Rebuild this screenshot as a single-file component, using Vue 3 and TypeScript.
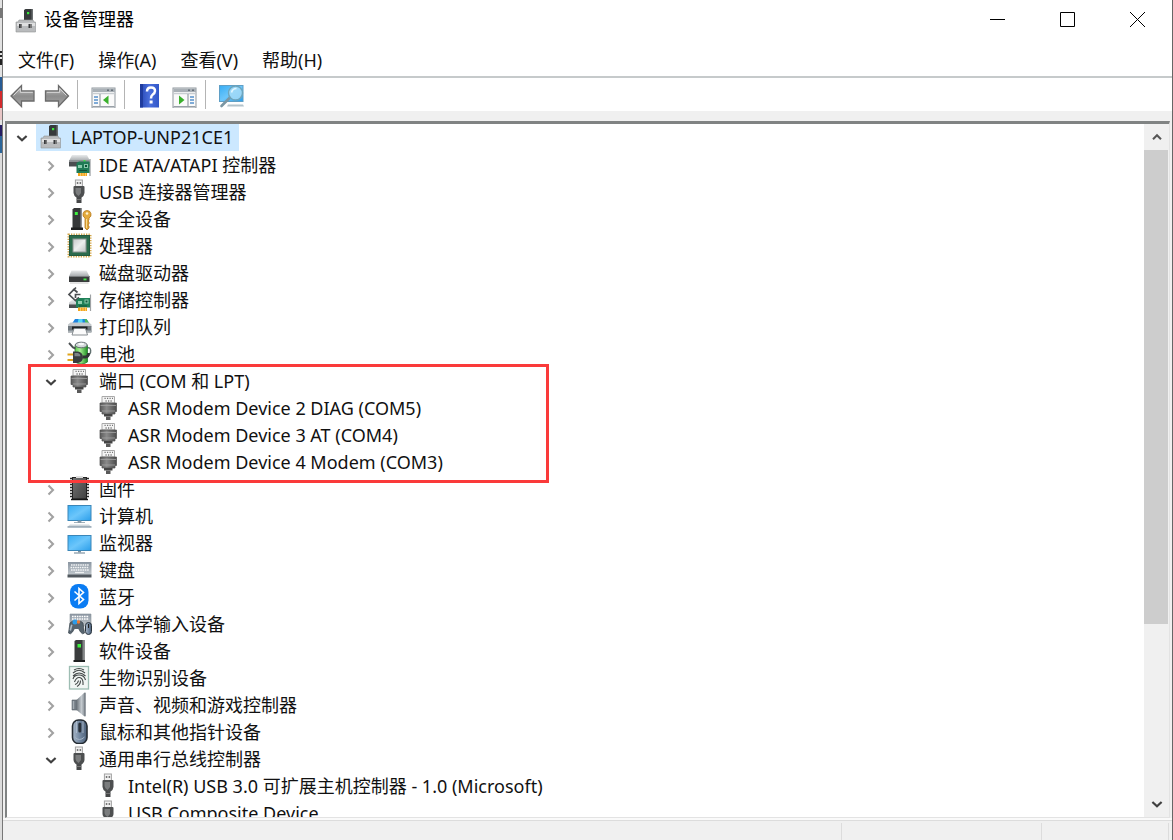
<script setup lang="ts">
import { ref } from 'vue'

interface Device {
  name: string
  icon: string
}

interface Category extends Device {
  open?: boolean
  marked?: boolean
  devices?: Device[]
}

const menus = ['文件(F)', '操作(A)', '查看(V)', '帮助(H)']

const toolGroups = [
  [
    { icon: 'back', label: '后退' },
    { icon: 'forward', label: '前进' },
  ],
  [{ icon: 'pane-left', label: '显示/隐藏控制台树' }],
  [
    { icon: 'help', label: '帮助' },
    { icon: 'pane-right', label: '显示/隐藏操作窗格' },
  ],
  [{ icon: 'scan', label: '扫描检测硬件改动' }],
]

const rootOpen = ref(true)

const categories = ref<Category[]>([
  { name: 'IDE ATA/ATAPI 控制器', icon: 'ide' },
  { name: 'USB 连接器管理器', icon: 'usb' },
  { name: '安全设备', icon: 'security' },
  { name: '处理器', icon: 'cpu' },
  { name: '磁盘驱动器', icon: 'disk' },
  { name: '存储控制器', icon: 'storage' },
  { name: '打印队列', icon: 'printer' },
  { name: '电池', icon: 'battery' },
  {
    name: '端口 (COM 和 LPT)',
    icon: 'port',
    open: true,
    marked: true,
    devices: [
      { name: 'ASR Modem Device 2 DIAG (COM5)', icon: 'port' },
      { name: 'ASR Modem Device 3 AT (COM4)', icon: 'port' },
      { name: 'ASR Modem Device 4 Modem (COM3)', icon: 'port' },
    ],
  },
  { name: '固件', icon: 'firmware' },
  { name: '计算机', icon: 'computer' },
  { name: '监视器', icon: 'monitor' },
  { name: '键盘', icon: 'keyboard' },
  { name: '蓝牙', icon: 'bluetooth' },
  { name: '人体学输入设备', icon: 'hid' },
  { name: '软件设备', icon: 'software' },
  { name: '生物识别设备', icon: 'biometric' },
  { name: '声音、视频和游戏控制器', icon: 'sound' },
  { name: '鼠标和其他指针设备', icon: 'mouse' },
  {
    name: '通用串行总线控制器',
    icon: 'usb',
    open: true,
    devices: [
      { name: 'Intel(R) USB 3.0 可扩展主机控制器 - 1.0 (Microsoft)', icon: 'usb' },
      { name: 'USB Composite Device', icon: 'usb' },
    ],
  },
])
</script>

<template>
  <div class="screen">
    <svg class="defs" width="0" height="0" aria-hidden="true">
      <defs>
        <linearGradient id="gMetal" x1="0" y1="0" x2="0" y2="1">
          <stop offset="0" stop-color="#e9ebec" /><stop offset="1" stop-color="#a3a7aa" />
        </linearGradient>
        <linearGradient id="gArrow" x1="0" y1="0" x2="0" y2="1">
          <stop offset="0" stop-color="#c4c4c4" /><stop offset="0.5" stop-color="#8c8c8c" /><stop offset="1" stop-color="#a8a8a8" />
        </linearGradient>
        <linearGradient id="gScreen" x1="0" y1="0" x2="1" y2="1">
          <stop offset="0" stop-color="#37adf4" /><stop offset="0.5" stop-color="#6cc6fb" /><stop offset="1" stop-color="#2b9eea" />
        </linearGradient>
        <linearGradient id="gHelp" x1="0" y1="0" x2="1" y2="0">
          <stop offset="0" stop-color="#2647b4" /><stop offset="0.5" stop-color="#4a6fdc" /><stop offset="1" stop-color="#3157c8" />
        </linearGradient>
        <linearGradient id="gPlug" x1="0" y1="0" x2="1" y2="0">
          <stop offset="0" stop-color="#5a5a5a" /><stop offset="0.4" stop-color="#8a8a8a" /><stop offset="1" stop-color="#4c4c4c" />
        </linearGradient>
        <linearGradient id="gChip" x1="0" y1="0" x2="1" y2="1">
          <stop offset="0" stop-color="#737373" /><stop offset="1" stop-color="#3f3f3f" />
        </linearGradient>
        <linearGradient id="gCap" x1="0" y1="0" x2="1" y2="1">
          <stop offset="0" stop-color="#c4c7c8" /><stop offset="0.5" stop-color="#eceeee" /><stop offset="1" stop-color="#bfc3c4" />
        </linearGradient>
        <linearGradient id="gKeys" x1="0" y1="0" x2="0" y2="1">
          <stop offset="0" stop-color="#8b96a2" /><stop offset="1" stop-color="#c1c8cd" />
        </linearGradient>
        <linearGradient id="gMouse" x1="0" y1="0" x2="1" y2="0">
          <stop offset="0" stop-color="#a9b8c9" /><stop offset="0.5" stop-color="#7388a1" /><stop offset="1" stop-color="#4c6079" />
        </linearGradient>
        <linearGradient id="gCone" x1="0" y1="0" x2="1" y2="0">
          <stop offset="0" stop-color="#6a7279" /><stop offset="0.55" stop-color="#c4cacf" /><stop offset="1" stop-color="#7d868d" />
        </linearGradient>
        <linearGradient id="gBattery" x1="0" y1="0" x2="1" y2="0">
          <stop offset="0" stop-color="#5ecb4f" /><stop offset="0.4" stop-color="#a6ef92" /><stop offset="1" stop-color="#1e8d22" />
        </linearGradient>
      </defs>

      <symbol id="chevron-right" viewBox="0 0 14 14">
        <path d="M4.500 2.600 9 7 4.500 11.400" fill="none" stroke="#a2a2a2" stroke-width="2.100" />
      </symbol>
      <symbol id="chevron-down" viewBox="0 0 14 14">
        <path d="M2.400 5 7 9.300 11.600 5" fill="none" stroke="#404040" stroke-width="2.200" />
      </symbol>
      <symbol id="chevron-up" viewBox="0 0 14 14">
        <path d="M3 9.300 7 5.200 11 9.300" fill="none" stroke="#555" stroke-width="2" />
      </symbol>

      <symbol id="root" viewBox="0 0 26 26">
        <path d="M11 3 12.500 2H20v12h-9z" fill="#373a3c" />
        <path d="M18.500 2H20v12h-1.500z" fill="#6a6e70" />
        <rect x="14" y="5" width="2.200" height="2.200" fill="#39e83d" />
        <path d="M3 15h2l1-2h14l1 2h1.500v10H3z" fill="#b9bbbd" stroke="#919496" stroke-width=".6" />
        <path d="M4 16h18v3H4z" fill="#dedfe0" />
        <path d="M6 17h3v4H6zM15.500 17h3v4h-3z" fill="#383a3c" />
        <path d="M7.500 17H9v4H7.500zM17 17h1.500v4H17z" fill="#777" />
      </symbol>

      <symbol id="ide" viewBox="0 0 26 26">
        <path d="M6 4h15l3 6H3z" fill="url(#gMetal)" />
        <path d="M3 9.500h21v6H3z" fill="#4b4e50" />
        <path d="M3 9.500h21v1.200H3z" fill="#a9adaf" />
        <rect x="17.500" y="9" width="2" height="1.600" fill="#3ee444" />
        <path d="M24 8v17" stroke="#9da1a4" stroke-width="1.300" />
        <path d="M10.500 12 13 10.500h10.500V22h-13z" fill="#1f7b55" />
        <path d="M12 14h4v3h-4zM18 13h4v4h-4z" fill="#88c9aa" />
        <path d="M19 14h2v2h-2zM13 19h8v1h-8z" fill="#0f4e36" />
        <path d="M12 22h9v3h-9z" fill="#f3a51d" />
        <path d="M14.500 22v3M17 22v3M19.500 22v3" stroke="#fff0c0" stroke-width=".5" />
      </symbol>

      <symbol id="usb" viewBox="0 0 26 26">
        <rect x="9.400" y="2" width="7" height="7" fill="#f0f0f0" stroke="#a2a2a2" />
        <path d="M10.800 4h1.500v2h-1.500zM13.600 4h1.500v2h-1.500z" fill="#777" />
        <path d="M7.500 9q0-1 1-1h9q1 0 1 1v6q0 2.500-3.500 5h-4Q7.500 17.500 7.500 15z" fill="#4d4f50" />
        <path d="M9.500 10h5.500v5q-1.500 2-2.500 3-3-2-3-4z" fill="#7a7c7d" />
        <path d="M10.500 19.500h5V25h-5z" fill="#454748" />
        <path d="M10.500 21.500h5" stroke="#8a8a8a" stroke-width=".7" />
      </symbol>

      <symbol id="security" viewBox="0 0 26 26">
        <path d="M6.500 4.500 8 3h8v20H6.500z" fill="#363839" />
        <path d="M14.500 3H16v20h-1.500z" fill="#8c8f91" />
        <path d="M5 22.500h12V25H5z" fill="#1f2021" />
        <rect x="8.800" y="7" width="3" height="3" fill="#3ef23f" />
        <path d="M21 5.500a4 4 0 0 0-2 7.500v10l2 2 2-2v-2l-1.300-1 1.300-1v-2l-1-1 1-1v-2a4 4 0 0 0-2-7.500z" fill="#e3aa3c" stroke="#b67a1f" stroke-width=".8" />
        <circle cx="21" cy="8.500" r="1.300" fill="#fff3cf" />
        <path d="M20.500 14v9" stroke="#f9dc91" />
      </symbol>

      <symbol id="cpu" viewBox="0 0 26 26">
        <rect x="2.500" y="2.500" width="22" height="22" fill="none" stroke="#d2a648" stroke-width="2" stroke-dasharray="1.300 1.200" />
        <rect x="3.500" y="3.500" width="20" height="20" fill="#2b6b4c" stroke="#235940" />
        <rect x="7" y="7" width="13" height="13" fill="url(#gCap)" stroke="#8d9692" />
      </symbol>

      <symbol id="disk" viewBox="0 0 26 26">
        <path d="M5.500 11.500h15l3 6H3z" fill="url(#gMetal)" />
        <path d="M3 17h20.500v6H3z" fill="#393b3c" />
        <path d="M3 17h20.500v1H3z" fill="#7b7e80" />
        <rect x="17.500" y="19.500" width="3" height="1.800" fill="#43e949" />
        <path d="M4 24h18.500" stroke="#c6c6c6" />
      </symbol>

      <symbol id="storage" viewBox="0 0 26 26">
        <path d="M3 16.500 6 14h9v8H3z" fill="url(#gMetal)" />
        <path d="M3 18.500h9V22H3z" fill="#4a4d4f" />
        <path d="M11.500 6.500 8 3.500 3 8.500l6.500 6 3.500-3" fill="none" stroke="#4b4e51" stroke-width="1.700" />
        <path d="M7 4.500 10 1.500M14.500 8.500H9.500v3.500" fill="none" stroke="#4b4e51" stroke-width="1.700" />
        <path d="M24.500 8.500V25" stroke="#9ea2a4" stroke-width="1.200" />
        <path d="M10 14.500 13 12h11v9.500H10z" fill="#1f8058" />
        <path d="M12 15h4v3h-4zM18.500 13.500h4v4h-4z" fill="#8dceaf" />
        <path d="M19.500 14.500h2v2h-2zM13 19.500h8v1h-8z" fill="#0f5539" />
        <path d="M12 21.500h9V25h-9z" fill="#f3a51d" />
        <path d="M14.500 21.500V25M17 21.500V25M19.500 21.500V25" stroke="#fff0c0" stroke-width=".5" />
      </symbol>

      <symbol id="printer" viewBox="0 0 26 26">
        <path d="M6 10.500 9 6h11.500l3 4.500z" fill="#1e83df" />
        <path d="M12.500 6h4v4.500h-5z" fill="#52d6f3" />
        <path d="M18.500 6h2l3 4.500h-4z" fill="#4cba59" />
        <path d="M2 11.500 4.500 9.500h18.500l2.500 2v2H2z" fill="#c3c8cb" />
        <path d="M2 13h23.500v6.500H2z" fill="#71797f" />
        <path d="M2 17.500h23.500v1.500H2z" fill="#a9b0b5" />
        <path d="M6 13.500h15.500v3H6z" fill="#202425" />
        <path d="M8 15.500h11.500l2 6.500H6z" fill="#fbfbfb" stroke="#7c8286" stroke-width=".9" />
      </symbol>

      <symbol id="battery" viewBox="0 0 26 26">
        <path d="M20.500 8q5-1.500 4 4.500-1 3-4 5" fill="none" stroke="#60706f" stroke-width="1.500" />
        <path d="M9 5.500h12.500V22q-6 4-12.500 0z" fill="url(#gBattery)" stroke="#287f31" stroke-width=".8" />
        <ellipse cx="15.200" cy="5" rx="6" ry="2.800" fill="#d3d8d9" stroke="#636c70" />
        <ellipse cx="15.200" cy="4" rx="3" ry="1.300" fill="#f7f8f8" />
        <path d="m3 3 4 4.500 2.500 1" fill="none" stroke="#4c5153" stroke-width="1.900" />
        <path d="M1.500 14.500H8M1.500 20H8" stroke="#e0a51c" stroke-width="1.800" />
        <path d="M7 11.500h5q5 1 5 5.800t-5 5.700H7z" fill="#393d3f" />
        <path d="M17 17h2.500q3 0 3-4" fill="none" stroke="#303335" stroke-width="2.800" />
        <path d="M8.500 13H12q2.500 1 2.500 3.200h-6z" fill="#7d8386" />
      </symbol>

      <symbol id="port" viewBox="0 0 26 26">
        <path d="M7 2.500h12.500v6.500H7z" fill="#f4f4f4" stroke="#aaa" />
        <path d="M9.500 4.300h1.200M12 4.300h1.200M14.500 4.300h1.200M17 4.300h1M10.500 7h1.200M13 7h1.200M15.500 7h1.200" stroke="#777" stroke-width="1.300" />
        <path d="M5 9h16.500v8.500h-1.500V20H7v-2.500H5z" fill="url(#gPlug)" stroke="#4e4e4e" stroke-width=".7" />
        <path d="M5.500 11.500h15.500M7 17h13" stroke="#a3a3a3" stroke-width=".8" />
        <path d="M9 20h8.500v2.500H9z" fill="#444" />
        <path d="M11 22.500h4.500V26H11z" fill="#5a5a5a" />
      </symbol>

      <symbol id="firmware" viewBox="0 0 26 26">
        <path d="M4 3.500h19M4 6.500h19M4 9.500h19M4 12.500h19M4 15.500h19M4 18.500h19M4 21.500h19" stroke="#292929" stroke-width="1.500" />
        <rect x="6.500" y="2.500" width="14" height="21.500" fill="url(#gChip)" stroke="#222" />
        <path d="M5 24.500h17" stroke="#161616" stroke-width="1.500" />
        <path d="M10 1h7v2h-7z" fill="#ddd" />
      </symbol>

      <symbol id="computer" viewBox="0 0 26 26">
        <rect x="2" y="3.500" width="23" height="15" fill="url(#gScreen)" stroke="#3a86b8" />
        <path d="M12 19h3v1.500h-3zM8 20.500h11" stroke="#8a9daa" stroke-width=".8" fill="#8a9daa" />
        <path d="M4 22.500h19l2.500 2.500h-24z" fill="#cfd7dc" />
        <path d="M1.500 25h24" stroke="#7d93a3" stroke-width="1.200" />
      </symbol>

      <symbol id="monitor" viewBox="0 0 26 26">
        <rect x="2" y="6.500" width="23" height="15" fill="url(#gScreen)" stroke="#3a86b8" />
        <path d="M12 22h3v1.500h-3z" fill="#7c929f" />
        <path d="M8 24h11" stroke="#8a9daa" stroke-width="1.300" />
      </symbol>

      <symbol id="keyboard" viewBox="0 0 26 26">
        <path d="M2 6h23.500v13H2z" fill="url(#gKeys)" />
        <path d="M5 9h18M4.500 11.500h18M5 14h18" stroke="#f2f4f5" stroke-width="1.400" stroke-dasharray="1.600 .7" />
        <path d="M9 16.500h9" stroke="#eef0f1" stroke-width="1.200" />
        <path d="M1.500 18.500h24V21.500h-24z" fill="#51585e" />
      </symbol>

      <symbol id="bluetooth" viewBox="0 0 26 26">
        <rect x="4" y="1" width="18.500" height="24.500" rx="8" fill="#0a7cf3" />
        <path d="m8.500 8.500 9 8-4.500 4V5.500l4.500 4-9 8" fill="none" stroke="#fff" stroke-width="1.600" />
      </symbol>

      <symbol id="hid" viewBox="0 0 26 26">
        <path d="M4 4h21v12H4z" fill="url(#gKeys)" stroke="#8b949b" stroke-width=".6" />
        <path d="M6 6.500h17M6 9h17" stroke="#fff" stroke-width="1.300" stroke-dasharray="1.600 .8" />
        <path d="M4 13q2-3 5-1h3q3-2 5 1l1.500 10q-2 2-4-1l-2-3.500H8.500l-2 3.500q-2 3-4 1z" fill="#57646f" stroke="#3a454e" stroke-width=".7" />
        <path d="M3.500 20 5 14.500l1.500.5-1.500 6z" fill="#acb9c4" />
        <circle cx="9" cy="12" r="2.500" fill="#2d9be7" /><circle cx="12.500" cy="12" r="1.700" fill="#ef7932" />
        <rect x="19.500" y="12.500" width="6" height="12" rx="3" fill="url(#gMouse)" stroke="#29323b" />
        <path d="M22.500 14v4" stroke="#222" />
      </symbol>

      <symbol id="software" viewBox="0 0 26 26">
        <path d="M8.500 4 10 3h8.500v20h-10z" fill="#3a3c3d" />
        <path d="M16.500 3h2v20h-2z" fill="#828586" />
        <path d="M7.500 23H19v2H7.500z" fill="#1e1f20" />
        <rect x="11.500" y="7" width="3.500" height="3.500" fill="#3ef23f" />
      </symbol>

      <symbol id="biometric" viewBox="0 0 26 26">
        <rect x="3.500" y="2.500" width="19" height="22.500" fill="#f1f6f4" stroke="#9dbdb3" stroke-width="1.300" />
        <g fill="none" stroke="#424747" stroke-width="1.100">
          <path d="M8 6q5-3 10 0M7 9q6-5.500 12 0M7 12q6-6 12.500 0M7 15q1-4 6-4t6.500 5M8.500 18q2-5 5-4.500T17 18v3M9 20.500q3-1 3.500-4M11 22.500q3.500-2 3.500-6" />
        </g>
      </symbol>

      <symbol id="sound" viewBox="0 0 26 26">
        <path d="M6 9h5v10H6z" fill="#727b83" stroke="#5c656c" stroke-width=".6" />
        <path d="M10.500 9 18.500 1.500h1V25.500h-1l-8-6.500z" fill="url(#gCone)" />
        <path d="M18.800 2v23" stroke="#7d858c" stroke-width="1.500" />
        <path d="M7.500 10v8" stroke="#a6aeb4" stroke-width="1.500" />
      </symbol>

      <symbol id="mouse" viewBox="0 0 26 26">
        <rect x="6.500" y="2" width="14.500" height="23.500" rx="6" fill="url(#gMouse)" stroke="#252c33" stroke-width="1.600" />
        <path d="M10.500 3v12M17 3v12" stroke="#b5c2d0" stroke-width=".8" />
        <rect x="12.300" y="4.500" width="3" height="10" rx="1.500" fill="#29313a" />
        <path d="M8.500 19q5 5 10 0" fill="none" stroke="#a4b4c5" />
      </symbol>

      <symbol id="back" viewBox="0 0 26 26">
        <path d="M1 14 11.500 3.500V9H24v10H11.500v5.500z" fill="url(#gArrow)" stroke="#6b6b6b" stroke-width="1.300" />
        <path d="M3.500 13.500 10.300 6.500V10.300h12.500" fill="none" stroke="#dadada" />
      </symbol>
      <symbol id="forward" viewBox="0 0 26 26">
        <path d="M24.500 14 14.500 3.500V9H1.500v10h13v5.500z" fill="url(#gArrow)" stroke="#6b6b6b" stroke-width="1.300" />
        <path d="M2.800 10.300H15.700V6.500L22.500 13.500" fill="none" stroke="#dadada" />
      </symbol>
      <symbol id="pane-left" viewBox="0 0 26 26">
        <rect x="1" y="6" width="23" height="20" fill="#fafafa" stroke="#8f979e" />
        <path d="M1.500 6.500h22.500V10h-22.500z" fill="#a9b0b6" />
        <path d="M16 7.500h2V9h-2zM20 7.500h2V9h-2z" fill="#67707a" />
        <path d="M1.500 11.500h22" stroke="#c9ced2" stroke-width="1.500" />
        <path d="M9 12v13M1.500 24.500h22" stroke="#98a0a7" stroke-width="1.200" />
        <path d="M3 15h4M3 18h4M3 21h4" stroke="#5791cc" stroke-width="1.500" />
        <path d="M17.500 13.500v9L12 18z" fill="#3ab02c" />
      </symbol>
      <symbol id="pane-right" viewBox="0 0 26 26">
        <rect x="1" y="6" width="23" height="20" fill="#fafafa" stroke="#8f979e" />
        <path d="M1.500 6.500h22.500V10h-22.500z" fill="#a9b0b6" />
        <path d="M16 7.500h2V9h-2zM20 7.500h2V9h-2z" fill="#67707a" />
        <path d="M1.500 11.500h22" stroke="#c9ced2" stroke-width="1.500" />
        <path d="M16 12v13M1.500 24.500h22" stroke="#98a0a7" stroke-width="1.200" />
        <path d="M18 15h4M18 18h4M18 21h4" stroke="#5791cc" stroke-width="1.500" />
        <path d="M7 13.500v9l5.500-4.500z" fill="#3ab02c" />
      </symbol>
      <symbol id="help" viewBox="0 0 26 26">
        <path d="M2 2h19v23.500H2z" fill="url(#gHelp)" />
        <path d="M2 2h3v23.500H2z" fill="#1f3c9e" />
        <path d="M9 9.500q0-4 4-4t4 3.600q0 2-2.500 3.600-1.500 1-1.500 3.800" fill="none" stroke="#fff" stroke-width="2.500" />
        <rect x="11.600" y="18.500" width="3" height="3" fill="#fff" />
      </symbol>
      <symbol id="scan" viewBox="0 0 26 26">
        <rect x="0.500" y="3.500" width="23.500" height="16" fill="url(#gScreen)" stroke="#5f9fc6" />
        <path d="M9 22.500h15l1 2H8z" fill="#b4c3cb" />
        <path d="M11 15.500 2.500 24" stroke="#7b96a3" stroke-width="2.600" stroke-linecap="round" />
        <circle cx="16.500" cy="11" r="7" fill="#a5dcf8" fill-opacity=".85" stroke="#6ea5bc" stroke-width="1.400" />
        <path d="M12.500 10.500q1-4 5-4" fill="none" stroke="#e3f7ff" stroke-width="1.600" />
      </symbol>
    </svg>

    <div class="backdrop"></div>

    <main class="window">
      <header class="titlebar">
        <svg class="icon"><use href="#root" /></svg>
        <h1>设备管理器</h1>
        <div class="captions">
          <button type="button" aria-label="最小化">
            <svg viewBox="0 0 15 15"><path d="M0 7.500h15" /></svg>
          </button>
          <button type="button" aria-label="最大化">
            <svg viewBox="0 0 15 15"><path d="M.5.500h14v14H.5z" /></svg>
          </button>
          <button type="button" aria-label="关闭">
            <svg viewBox="0 0 15 15"><path d="m0 0 15 15M15 0 0 15" /></svg>
          </button>
        </div>
      </header>

      <nav class="menubar">
        <button v-for="menu in menus" :key="menu" type="button">{{ menu }}</button>
      </nav>

      <div class="toolbar" role="toolbar">
        <div v-for="(group, index) in toolGroups" :key="index" class="tool-group">
          <button v-for="tool in group" :key="tool.icon" type="button" :aria-label="tool.label">
            <svg class="icon"><use :href="`#${tool.icon}`" /></svg>
          </button>
        </div>
      </div>

      <section class="tree-frame">
        <div class="tree">
          <div class="row root">
            <button class="twisty" type="button" aria-label="展开或折叠" @click="rootOpen = !rootOpen">
              <svg><use :href="rootOpen ? '#chevron-down' : '#chevron-right'" /></svg>
            </button>
            <span class="entry selected">
              <svg class="icon"><use href="#root" /></svg>
              <span>LAPTOP-UNP21CE1</span>
            </span>
          </div>
          <ul v-if="rootOpen" class="categories">
            <li v-for="category in categories" :key="category.name" :class="{ marked: category.marked }">
              <div class="row category">
                <button class="twisty" type="button" aria-label="展开或折叠" @click="category.open = !category.open">
                  <svg><use :href="category.open ? '#chevron-down' : '#chevron-right'" /></svg>
                </button>
                <span class="entry">
                  <svg class="icon"><use :href="`#${category.icon}`" /></svg>
                  <span>{{ category.name }}</span>
                </span>
              </div>
              <ul v-if="category.open && category.devices">
                <li v-for="device in category.devices" :key="device.name" class="row device">
                  <span class="entry">
                    <svg class="icon"><use :href="`#${device.icon}`" /></svg>
                    <span>{{ device.name }}</span>
                  </span>
                </li>
              </ul>
            </li>
          </ul>
        </div>
        <div class="scrollbar">
          <button type="button" aria-label="向上滚动"><svg><use href="#chevron-up" /></svg></button>
          <div class="track"><div class="thumb"></div></div>
          <button type="button" aria-label="向下滚动"><svg><use href="#chevron-down" /></svg></button>
        </div>
      </section>

      <footer class="statusbar">
        <span class="main-cell"></span>
        <span class="cell wide"></span>
        <span class="cell"></span>
      </footer>
    </main>
  </div>
</template>

<style>
body {
  margin: 0;
  overflow: hidden;
}
</style>

<style scoped>
.screen {
  display: flex;
  height: 100vh;
  overflow: hidden;
  color: #111;
  font-family: 'Noto Sans', 'Noto Sans CJK SC', sans-serif;
  font-size: 18px;
  line-height: 27px;
}

.defs {
  position: absolute;
}

button {
  display: flex;
  align-items: center;
  justify-content: center;
  padding: 0;
  border: 0;
  background: none;
  color: inherit;
  font: inherit;
}

ul {
  margin: 0;
  padding: 0;
  list-style: none;
}

.icon {
  flex: none;
  width: 26px;
  height: 26px;
}

/* Sliver of the desktop that shows to the left of the window */
.backdrop {
  flex: none;
  width: 2px;
  background: linear-gradient(
    #e2e2e2 8px, #777 8px 18px, #e2e2e2 18px 51px, #222 51px 53px, #e2e2e2 53px 55px,
    #222 55px 57px, #e2e2e2 57px 59px, #222 59px 65px, #e2e2e2 65px 77px, #275b94 77px 91px,
    #d42a2d 91px 108px, #e8c6c6 108px 120px, #e2e2e2 120px 125px, #241c62 125px 136px,
    #2b6599 136px 153px, #dcdcdc 153px
  );
}

.window {
  display: flex;
  flex: 1;
  flex-direction: column;
  min-width: 0;
  border-right: 1px solid #666;
  border-left: 1px solid #777;
  background: #f0f0f0;
}

.titlebar {
  display: flex;
  flex: none;
  align-items: center;
  height: 39px;
  padding-left: 10px;
  background: #fff;
}

.titlebar h1 {
  flex: 1;
  margin: 0 0 0 5px;
  color: #000;
  font-size: 18px;
  font-weight: 400;
}

.captions {
  display: flex;
  align-self: stretch;
}

.captions button {
  width: 70px;
}

.captions svg {
  width: 15px;
  height: 15px;
  fill: none;
  stroke: #000;
}

.menubar {
  display: flex;
  flex: none;
  gap: 24px;
  height: 37px;
  padding-left: 15px;
  border-bottom: 2px solid #c6cacb;
  background: #fff;
}

.menubar button {
  height: 42px;
}

.toolbar {
  display: flex;
  flex: none;
  height: 33px;
  margin-bottom: 10px;
  padding-left: 7px;
  background: #fff;
}

.tool-group {
  display: flex;
  align-items: center;
  gap: 8px;
  height: 29px;
  margin-top: 2px;
  padding-right: 7px;
}

.tool-group + .tool-group {
  padding-left: 13px;
  border-left: 1px solid #b4b4b4;
}

.tree-frame {
  display: flex;
  flex: 1;
  min-height: 0;
  margin: 0 2px 0 2px;
  border: solid #808383;
  border-width: 3px 0 0 2px;
  border-right: 1px solid #e3e3e3;
  border-bottom: 1px solid #e3e3e3;
  background: #fff;
}

.tree {
  flex: 1;
  min-width: 0;
  overflow: hidden;
}

.row {
  display: flex;
  align-items: center;
  height: 27px;
  white-space: nowrap;
}

.root {
  padding-left: 8px;
}

.categories {
  padding-top: 1px;
}

.category {
  padding-left: 37px;
}

.category .twisty {
  margin-right: 6px;
}

.device {
  padding-left: 86px;
}

.twisty {
  flex: none;
  width: 14px;
  height: 27px;
  margin-right: 7px;
}

.twisty svg,
.scrollbar svg {
  width: 14px;
  height: 14px;
}

.entry {
  display: flex;
  align-items: center;
  gap: 7px;
  height: 27px;
  padding: 0 6px 0 2px;
}

.entry .icon {
  margin-bottom: 3px;
}

.selected {
  background: #cce8ff;
}

.marked {
  position: relative;
}

/* Red annotation frame around the serial ports */
.marked::after {
  position: absolute;
  z-index: 1;
  top: -4px;
  bottom: -7px;
  left: 21px;
  box-sizing: border-box;
  width: 521px;
  border: 3px solid #fa3a3a;
  content: '';
  pointer-events: none;
}

.scrollbar {
  display: flex;
  flex: none;
  flex-direction: column;
  width: 25px;
  background: #f0f0f0;
}

.scrollbar button {
  height: 26px;
}

.track {
  flex: 1;
}

.thumb {
  width: 24px;
  height: 74%;
  background: #cdcdcd;
}

.statusbar {
  display: flex;
  flex: none;
  height: 19px;
  margin-top: 2px;
  border-top: 1px solid #dcdcdc;
  box-shadow: 0 -2px #fafafa;
}

.main-cell {
  flex: 1;
}

.cell {
  width: 126px;
  margin: 2px 0 0;
  border-left: 1px solid #dcdcdc;
}

.cell:last-child {
  margin-right: 3px;
  border-right: 1px solid #dcdcdc;
}

.wide {
  width: 199px;
}
</style>
